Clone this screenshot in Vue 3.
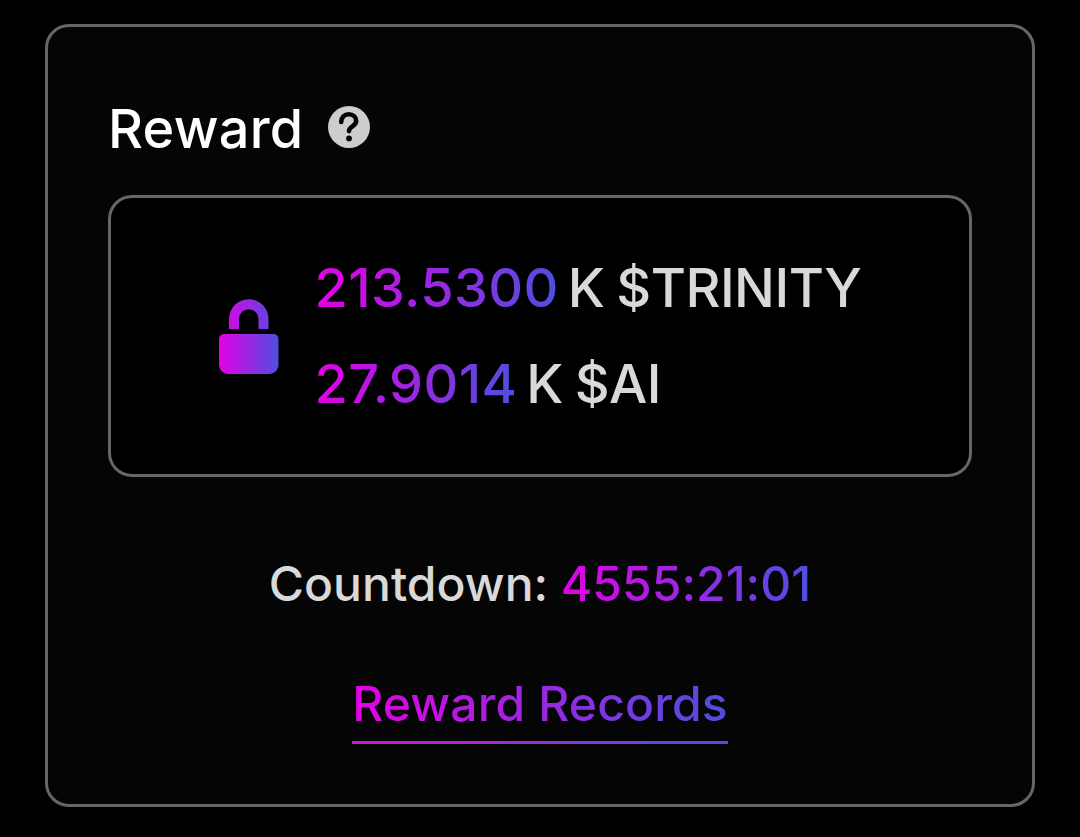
<template>
  <main class="page">
    <section class="card">
      <header class="card-header">
        <h2 class="title">Reward</h2>
        <svg class="help" viewBox="0 0 42 42" aria-label="Help">
          <circle cx="21" cy="21" r="21" fill="#cdcdcd" />
          <path
            d="M13.200 16C13.200 11.200 16.500 8.300 20.800 8.300c4.300 0 7.400 2.900 7.400 6.800 0 5.200-7.200 5.400-7.200 10"
            fill="none"
            stroke="#050505"
            stroke-width="4.600"
            stroke-linecap="round"
          />
          <circle cx="21" cy="32.400" r="2.900" fill="#050505" />
        </svg>
      </header>

      <div class="reward-box">
        <svg class="lock" viewBox="0 0 60 76" aria-hidden="true">
          <defs>
            <linearGradient id="lock-fill" gradientUnits="userSpaceOnUse" x1="0" y1="0" x2="60" y2="0">
              <stop offset="0" stop-color="#e400e6" />
              <stop offset="1" stop-color="#4e4fe0" />
            </linearGradient>
          </defs>
          <path d="M10 31V21a19.750 19.750 0 0 1 39.500 0v10H39.500V21a9.750 9.750 0 0 0-19.500 0v10z" fill="url(#lock-fill)" />
          <path d="M5 36h49.500a5 5 0 0 1 5 5v26a9 9 0 0 1-9 9H9a9 9 0 0 1-9-9V41a5 5 0 0 1 5-5z" fill="url(#lock-fill)" />
        </svg>
        <ul class="amounts">
          <li v-for="item in rewards" :key="item.token" class="amount">
            <span class="gradient">{{ item.value }}</span>
            <span class="unit">K ${{ item.token }}</span>
          </li>
        </ul>
      </div>

      <p class="countdown">
        <span>Countdown:</span>
        <span class="gradient">{{ countdown }}</span>
      </p>

      <a class="records"><span class="gradient">Reward Records</span></a>
    </section>
  </main>
</template>

<script setup>
const rewards = [
  { value: '213.5300', token: 'TRINITY' },
  { value: '27.9014', token: 'AI' }
]

const countdown = '4555:21:01'
</script>

<style>
body {
  margin: 0;
  background: #000;
}
</style>

<style scoped>
.page {
  box-sizing: border-box;
  width: 1080px;
  height: 837px;
  padding: 24px 45px 30px;
  background: #000;
  color: #d9d9d9;
  font-family: Inter, "Liberation Sans", sans-serif;
  font-weight: 500;
}

.card {
  box-sizing: border-box;
  display: flex;
  flex-direction: column;
  align-items: center;
  height: 783px;
  padding: 69px 60px 0;
  border: 3px solid #666;
  border-radius: 24px;
  background: #050505;
}

.card-header {
  display: flex;
  align-items: center;
  align-self: stretch;
  gap: 24px;
  height: 66px;
}

.title {
  margin: 0;
  color: #fff;
  font-size: 54px;
  font-weight: 500;
  line-height: 66px;
  letter-spacing: 0.3px;
}

.help {
  width: 42px;
  height: 42px;
  margin-bottom: 4px;
}

.reward-box {
  box-sizing: border-box;
  display: flex;
  align-items: center;
  align-self: stretch;
  height: 282px;
  margin-top: 33px;
  padding-left: 108px;
  border: 3px solid #666;
  border-radius: 24px;
  background: #000;
}

.lock {
  width: 60px;
  height: 76px;
  margin-right: 35.5px;
}

.amounts {
  margin: 0;
  padding: 0;
  list-style: none;
}

.amount {
  display: flex;
  gap: 9px;
  font-size: 54px;
  line-height: 96px;
}

.amount .gradient {
  letter-spacing: 0.4px;
}

.unit {
  letter-spacing: -0.5px;
  word-spacing: -2px;
}

.gradient {
  background: linear-gradient(90deg, #e400e6, #4e4fe0);
  -webkit-background-clip: text;
  background-clip: text;
  color: transparent;
}

.countdown {
  display: flex;
  gap: 12.5px;
  margin: 78px 0 0;
  font-size: 48px;
  line-height: 58px;
  letter-spacing: 0.05px;
}

.records {
  margin-top: 62px;
  padding-bottom: 8px;
  border-bottom: 3px solid;
  border-image: linear-gradient(90deg, #d414d6, #4e4fe0) 1;
  font-size: 48px;
  line-height: 58px;
  letter-spacing: 0.15px;
}
</style>
